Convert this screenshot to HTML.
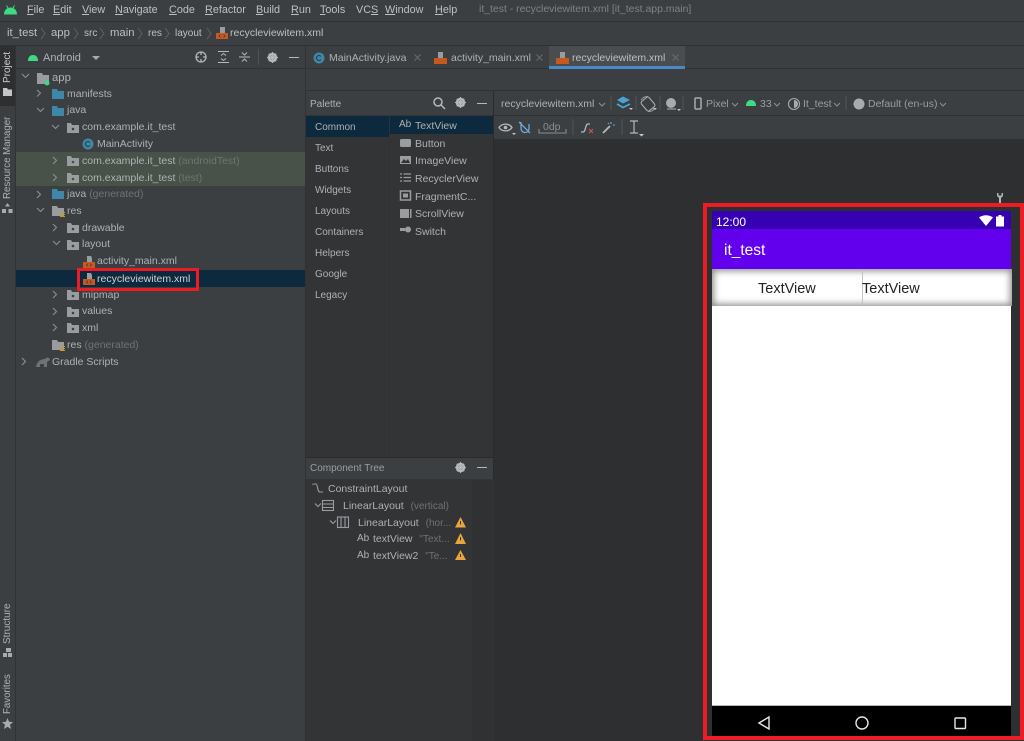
<!DOCTYPE html>
<html><head><meta charset="utf-8">
<style>
html,body{margin:0;padding:0;width:1024px;height:741px;overflow:hidden;background:#3c3f41}
body{position:relative;font-family:"Liberation Sans",sans-serif;font-size:10.5px;color:#aeb2b4}
.t{position:absolute;white-space:nowrap;line-height:14px}
.b{position:absolute}
.g{color:#6f7375}
.m{color:#bcc0c2;font-size:10.8px}
u{text-decoration:underline;text-underline-offset:1px}
svg{position:absolute;overflow:visible}
.v{position:absolute;white-space:nowrap;transform-origin:0 0;transform:rotate(-90deg);line-height:12px;font-size:10px;color:#aeb2b4}
</style></head><body>
<!-- structural bands -->
<div class="b" style="left:0;top:21px;width:1024px;height:1px;background:#323232"></div>
<div class="b" style="left:0;top:45px;width:1024px;height:1px;background:#323232"></div>
<div class="b" style="left:15px;top:46px;width:1px;height:695px;background:#323232"></div>
<div class="b" style="left:0;top:46px;width:15px;height:60px;background:#2d2f30"></div>
<div class="b" style="left:16px;top:68px;width:289px;height:1px;background:#323232"></div>
<div class="b" style="left:305px;top:46px;width:1px;height:695px;background:#323232"></div>
<div class="b" style="left:16px;top:270px;width:289px;height:17px;background:#0d293e"></div>
<div class="b" style="left:16px;top:152px;width:289px;height:34px;background:#495249"></div>

<!-- right side -->
<div class="b" style="left:306px;top:68px;width:718px;height:1px;background:#323232"></div>
<div class="b" style="left:306px;top:90px;width:718px;height:1px;background:#323232"></div>
<div class="b" style="left:549px;top:46px;width:136px;height:22px;background:#4a4d50"></div>
<div class="b" style="left:549px;top:66px;width:136px;height:3px;background:#4a88c7"></div>

<!-- palette panel -->
<div class="b" style="left:306px;top:115px;width:188px;height:342px;background:#323436"></div>
<div class="b" style="left:306px;top:116px;width:83px;height:21px;background:#0d293e"></div>
<div class="b" style="left:390px;top:116px;width:104px;height:18px;background:#0d293e"></div>
<div class="b" style="left:389px;top:116px;width:1px;height:341px;background:#2f3132"></div>
<div class="b" style="left:493px;top:91px;width:1px;height:650px;background:#2b2b2b"></div>
<div class="b" style="left:306px;top:457px;width:188px;height:1px;background:#2b2b2b"></div>
<div class="b" style="left:306px;top:479px;width:188px;height:262px;background:#323436"></div>
<div class="b" style="left:472px;top:480px;width:21px;height:261px;background:#2f3132"></div>

<!-- toolbars / canvas -->
<div class="b" style="left:494px;top:115px;width:530px;height:1px;background:#323232"></div>
<div class="b" style="left:494px;top:139px;width:530px;height:602px;background:#2d2f30"></div>

<!-- menu -->
<svg style="left:3px;top:5px" width="15" height="10" viewBox="0 0 15 10"><path d="M1 9.500C1 5 4 2.500 7.500 2.500S14 5 14 9.500Z" fill="#3ddc84"/><path d="M3.500 .5L5 3M11.500 .5L10 3" stroke="#3ddc84"/></svg>
<div class="t m" style="left:27px;top:3px"><u>F</u>ile</div>
<div class="t m" style="left:53px;top:3px"><u>E</u>dit</div>
<div class="t m" style="left:82px;top:3px"><u>V</u>iew</div>
<div class="t m" style="left:115px;top:3px"><u>N</u>avigate</div>
<div class="t m" style="left:169px;top:3px"><u>C</u>ode</div>
<div class="t m" style="left:205px;top:3px"><u>R</u>efactor</div>
<div class="t m" style="left:256px;top:3px"><u>B</u>uild</div>
<div class="t m" style="left:291px;top:3px"><u>R</u>un</div>
<div class="t m" style="left:320px;top:3px"><u>T</u>ools</div>
<div class="t m" style="left:356px;top:3px">VC<u>S</u></div>
<div class="t m" style="left:385px;top:3px"><u>W</u>indow</div>
<div class="t m" style="left:435px;top:3px"><u>H</u>elp</div>
<div class="t" style="left:479px;top:3px;color:#7f8385;font-size:10.45px">it_test - recycleviewitem.xml [it_test.app.main]</div>

<!-- breadcrumb -->
<div class="t m" style="left:7px;top:26px;font-size:11.300px">it_test</div>
<div class="t m" style="left:51px;top:26px;font-size:11.300px">app</div>
<div class="t m" style="left:84px;top:27px;font-size:10px">src</div>
<div class="t m" style="left:110px;top:26px;font-size:11.300px">main</div>
<div class="t m" style="left:148px;top:27px;font-size:10px">res</div>
<div class="t m" style="left:175px;top:27px;font-size:10px">layout</div>
<svg style="left:0;top:27px" width="215" height="13" fill="none" stroke="#5f6264"><path d="M41 1L45 6.500 41 12M74 1L78 6.500 74 12M100 1L104 6.500 100 12M138 1L142 6.500 138 12M165 1L169 6.500 165 12M207 1L211 6.500 207 12"/></svg>
<svg style="left:216px;top:27px" width="12" height="13"><path d="M4 0H9V6H4Z" fill="#9a9d9f"/><rect y="6" width="12" height="6" fill="#c5591f"/><path d="M4.500 7.500L3 9 4.500 10.500M7.500 7.500L9 9 7.500 10.500" stroke="#3c3f41" fill="none" stroke-width=".8"/></svg>
<div class="t m" style="left:230px;top:26px;font-size:10.5px">recycleviewitem.xml</div>

<!-- left strip -->
<div class="v" style="left:2px;top:83px;color:#cfcfcf">Project</div>
<svg style="left:2px;top:88px" width="11" height="8"><path d="M1 0H5L6 1.500H10V8H1Z" fill="#c4c4c4"/></svg>
<div class="v" style="left:2px;top:199px;font-size:9.7px">Resource Manager</div>
<svg style="left:2px;top:203px" width="11" height="10"><path d="M5.500 0L8 3.500H3ZM0 10V6H4V10ZM6.500 10V6H10.500V10Z" fill="#a8abad"/></svg>
<div class="v" style="left:2px;top:644px">Structure</div>
<svg style="left:3px;top:648px" width="9" height="9"><path d="M3 0H8V4H3ZM0 5H4V9H0ZM5 5H9V9H5Z" fill="#a8abad"/></svg>
<div class="v" style="left:2px;top:714px;font-size:9.7px">Favorites</div>
<svg style="left:2px;top:718px" width="11" height="11"><path d="M5.500 0L7 3.800 11 4.100 8 6.700 9 11 5.500 8.700 2 11 3 6.700 0 4.100 4 3.800Z" fill="#a8abad"/></svg>

<!-- project header -->
<svg style="left:28px;top:54px" width="10" height="7"><path d="M0 7C0 3 2 1 5 1S10 3 10 7Z" fill="#3ddc84"/></svg>
<div class="t" style="left:43px;top:51px;font-size:11px">Android</div>
<svg style="left:92px;top:56px" width="9" height="5"><path d="M0 0H8L4 4Z" fill="#a8abad"/></svg>
<svg style="left:195px;top:51px" width="12" height="12" fill="none" stroke="#b4b8ba" stroke-width="1.300"><circle cx="6" cy="6" r="5"/><path d="M6 1V4M6 8V11M1 6H4M8 6H11"/></svg>
<svg style="left:218px;top:51px" width="11" height="12" fill="none" stroke="#b4b8ba"><path d="M0 .5H11M0 11.500H11M3 4.500L5.500 2.500 8 4.500M3 7.500L5.500 9.500 8 7.500"/></svg>
<svg style="left:239px;top:51px" width="11" height="12" fill="none" stroke="#b4b8ba"><path d="M0 6H11M3 1.500L5.500 4 8 1.500M3 10.500L5.500 8 8 10.500"/></svg>
<div class="b" style="left:258px;top:49px;width:1px;height:16px;background:#515151"></div>
<svg style="left:267px;top:52px" width="11" height="11"><circle cx="5.500" cy="5.500" r="3.500" fill="none" stroke="#b4b8ba" stroke-width="2.500"/><path d="M5.500 0V11M0 5.500H11M1.800 1.800L9.200 9.200M9.200 1.800L1.800 9.200" stroke="#b4b8ba" stroke-width="1.200"/></svg>
<div class="b" style="left:289px;top:57px;width:10px;height:1px;background:#b4b8ba"></div>

<!-- tree -->
<svg style="left:0;top:69px" width="305" height="300" fill="none" stroke="#8d9092" stroke-width="1.100">
<path d="M22 5L25.500 8.500 29 5M37 21L40.500 24 37 27.500M37 39L40.500 42.500 44 39M52 56L55.500 59.500 59 56"/>
<path d="M53 88L56.500 91.500 53 95M53 105L56.500 108.500 53 112M37 122L40.500 125.500 37 129M37 139L40.500 142.500 44 139M53 155L56.500 158.500 53 162M53 172L56.500 175.500 60 172M53 222L56.500 225.500 53 229M53 239L56.500 242.500 53 246M53 255L56.500 258.500 53 262M22 289L25.500 292.500 22 296"/>
</svg>
<svg style="left:0;top:69px" width="305" height="300">
<path d="M37 4H42L43 6H49V15H37Z" fill="#9a9d9f"/><circle cx="47" cy="14" r="2.500" fill="#3ddc84"/>
<path d="M52 20H57L58 22H64V30H52Z" fill="#3f87a6"/>
<path d="M52 37H57L58 39H64V47H52Z" fill="#3f87a6"/>
<path d="M67 54H71L72 56H79V64H67Z" fill="#9a9d9f"/><circle cx="73" cy="60" r="1.300" fill="#3c3f41"/>
<path d="M67 87H71L72 89H79V97H67Z" fill="#9a9d9f"/><circle cx="73" cy="93" r="1.300" fill="#495249"/>
<path d="M67 104H71L72 106H79V114H67Z" fill="#9a9d9f"/><circle cx="73" cy="110" r="1.300" fill="#495249"/>
<path d="M52 120H57L58 122H64V130H52Z" fill="#3f87a6"/>
<path d="M52 137H57L58 139H64V147H52Z" fill="#9a9d9f"/><path d="M60 143.500H65M60 145.500H65M60 147.500H65" stroke="#c69a2b"/>
<path d="M67 154H71L72 156H79V164H67Z" fill="#9a9d9f"/><circle cx="73" cy="160" r="1.300" fill="#3c3f41"/>
<path d="M67 171H71L72 173H79V181H67Z" fill="#9a9d9f"/><circle cx="73" cy="177" r="1.300" fill="#3c3f41"/>
<path d="M67 221H71L72 223H79V231H67Z" fill="#9a9d9f"/><circle cx="73" cy="227" r="1.300" fill="#3c3f41"/>
<path d="M67 238H71L72 240H79V248H67Z" fill="#9a9d9f"/><circle cx="73" cy="244" r="1.300" fill="#3c3f41"/>
<path d="M67 254H71L72 256H79V264H67Z" fill="#9a9d9f"/><circle cx="73" cy="260" r="1.300" fill="#3c3f41"/>
<path d="M52 271H57L58 273H64V281H52Z" fill="#9a9d9f"/><path d="M60 277.500H65M60 279.500H65M60 281.500H65" stroke="#c69a2b"/>
<path d="M36 298C37 292 41 290 45 290C46 288 50 288 50 291L47 293V298H44V295H40V298Z" fill="#6f7274"/>
<circle cx="88" cy="75" r="5.500" fill="#3f87a6"/><path d="M90 73.500A2.500 2.500 0 1 0 90 76.500" stroke="#2d3a40" fill="none"/>
<path d="M87 187H91L92 189V193H87Z" fill="#9a9d9f"/><rect x="83" y="193" width="12" height="6" fill="#c5591f"/><path d="M88 194.500L86.500 196 88 197.500M90 194.500L91.500 196 90 197.500" stroke="#3c3f41" fill="none" stroke-width=".8"/>
<path d="M87 204H91L92 206V210H87Z" fill="#9a9d9f"/><rect x="83" y="210" width="12" height="6" fill="#c5591f"/><path d="M88 211.500L86.500 213 88 214.500M90 211.500L91.500 213 90 214.500" stroke="#3c3f41" fill="none" stroke-width=".8"/>
</svg>
<div class="t" style="left:52px;top:71px;font-size:11.300px">app</div>
<div class="t" style="left:67px;top:87px">manifests</div>
<div class="t" style="left:67px;top:103px">java</div>
<div class="t" style="left:82px;top:120px">com.example.it_test</div>
<div class="t" style="left:97px;top:137px">MainActivity</div>
<div class="t" style="left:82px;top:154px">com.example.it_test <span class="g">(androidTest)</span></div>
<div class="t" style="left:82px;top:171px">com.example.it_test <span class="g">(test)</span></div>
<div class="t" style="left:67px;top:187px">java <span class="g">(generated)</span></div>
<div class="t" style="left:67px;top:204px">res</div>
<div class="t" style="left:82px;top:221px">drawable</div>
<div class="t" style="left:82px;top:237px">layout</div>
<div class="t" style="left:97px;top:254px">activity_main.xml</div>
<div class="t" style="left:97px;top:272px;color:#d0d3d5">recycleviewitem.xml</div>
<div class="t" style="left:82px;top:288px">mipmap</div>
<div class="t" style="left:82px;top:304px">values</div>
<div class="t" style="left:82px;top:321px">xml</div>
<div class="t" style="left:67px;top:338px">res <span class="g">(generated)</span></div>
<div class="t" style="left:52px;top:355px">Gradle Scripts</div>
<div class="b" style="left:77px;top:268px;width:116px;height:17px;border:3px solid #ed1c24"></div>

<!-- tabs -->
<svg style="left:313px;top:52px" width="12" height="12"><circle cx="6" cy="6" r="5.500" fill="#3f87a6"/><path d="M8 4.500A2.500 2.500 0 1 0 8 7.500" stroke="#2d3a40" fill="none"/></svg>
<div class="t" style="left:329px;top:51px">MainActivity.java</div>
<svg style="left:414px;top:54px" width="120" height="8" fill="none" stroke="#6a6d6f"><path d="M.5 .5L6.500 6.500M6.500 .5L.5 6.500M122.500 .5L128.500 6.500M128.500 .5L122.500 6.500M258.500 .5L264.500 6.500M264.500 .5L258.500 6.500"/></svg>
<svg style="left:434px;top:52px" width="13" height="12"><path d="M4 0H9V6H4Z" fill="#9a9d9f"/><rect y="6" width="13" height="6" fill="#c5591f"/></svg>
<div class="t" style="left:451px;top:51px">activity_main.xml</div>
<svg style="left:556px;top:52px" width="13" height="12"><path d="M4 0H9V6H4Z" fill="#9a9d9f"/><rect y="6" width="13" height="6" fill="#c5591f"/></svg>
<div class="t" style="left:572px;top:51px;color:#bcc0c2">recycleviewitem.xml</div>

<!-- palette header -->
<div class="t" style="left:310px;top:98px;font-size:10px">Palette</div>
<svg style="left:433px;top:97px" width="12" height="12" fill="none" stroke="#b4b8ba" stroke-width="1.500"><circle cx="5" cy="5" r="4"/><path d="M8 8L12 12"/></svg>
<svg style="left:455px;top:97px" width="11" height="11"><circle cx="5.500" cy="5.500" r="3.500" fill="none" stroke="#b4b8ba" stroke-width="2.500"/><path d="M5.500 0V11M0 5.500H11M1.800 1.800L9.200 9.200M9.200 1.800L1.800 9.200" stroke="#b4b8ba" stroke-width="1.200"/></svg>
<div class="b" style="left:477px;top:103px;width:10px;height:1px;background:#b4b8ba"></div>
<div class="t" style="left:315px;top:121px;font-size:10px">Common</div>
<div class="t" style="left:315px;top:142px;font-size:10px">Text</div>
<div class="t" style="left:315px;top:163px;font-size:10px">Buttons</div>
<div class="t" style="left:315px;top:184px;font-size:10px">Widgets</div>
<div class="t" style="left:315px;top:205px;font-size:10px">Layouts</div>
<div class="t" style="left:315px;top:226px;font-size:10px">Containers</div>
<div class="t" style="left:315px;top:247px;font-size:10px">Helpers</div>
<div class="t" style="left:315px;top:268px;font-size:10px">Google</div>
<div class="t" style="left:315px;top:289px;font-size:10px">Legacy</div>
<div class="t" style="left:399px;top:118px;font-size:10px">Ab</div>
<div class="t" style="left:415px;top:119px">TextView</div>
<div class="t" style="left:415px;top:137px">Button</div>
<div class="t" style="left:415px;top:154px">ImageView</div>
<div class="t" style="left:415px;top:172px">RecyclerView</div>
<div class="t" style="left:415px;top:190px">FragmentC...</div>
<div class="t" style="left:415px;top:207px">ScrollView</div>
<div class="t" style="left:415px;top:225px">Switch</div>
<svg style="left:399px;top:138px" width="14" height="100">
<rect x="1" y="1" width="11" height="8" rx="1.500" fill="#9a9d9f"/>
<rect x="1" y="18" width="11" height="8" fill="#9a9d9f"/><path d="M2 25L5 21 7 23 9 21 11 25Z" fill="#323436"/>
<path d="M1 36H3M1 39.500H3M1 43H3M4.500 36H12M4.500 39.500H12M4.500 43H12" stroke="#9a9d9f" stroke-width="1.200"/>
<rect x="1.500" y="53" width="10" height="9" fill="none" stroke="#9a9d9f" stroke-width="1.500"/><rect x="4" y="55.500" width="5" height="4" fill="#9a9d9f"/>
<rect x="1" y="71" width="9" height="9" fill="#9a9d9f"/><rect x="11" y="71" width="1.500" height="9" fill="#9a9d9f"/>
<rect x="1" y="90" width="5" height="3" fill="#9a9d9f"/><circle cx="9" cy="91.500" r="3" fill="#9a9d9f"/>
</svg>

<!-- component tree -->
<div class="t" style="left:310px;top:462px;font-size:10px;color:#9a9ea0">Component Tree</div>
<svg style="left:455px;top:462px" width="11" height="11"><circle cx="5.500" cy="5.500" r="3.500" fill="none" stroke="#b4b8ba" stroke-width="2.500"/><path d="M5.500 0V11M0 5.500H11M1.800 1.800L9.200 9.200M9.200 1.800L1.800 9.200" stroke="#b4b8ba" stroke-width="1.200"/></svg>
<div class="b" style="left:477px;top:467px;width:10px;height:1px;background:#b4b8ba"></div>
<svg style="left:306px;top:480px" width="170" height="85" fill="none" stroke="#9a9d9f" stroke-width="1.100">
<path d="M8 4H10C12 4 11 12 14 12H17M7 3.500V5"/>
<path d="M9 23.500L12 26.500 15 23.500M24 40.500L27 43.500 30 40.500"/>
<rect x="16.500" y="20.500" width="11" height="10"/><path d="M16.500 24H27.500M16.500 27.500H27.500"/>
<rect x="31.500" y="37" width="11" height="10.500"/><path d="M35 37V47.500M39 37V47.500"/>
<g stroke="none"><path d="M154.500 37L160 47.500H149ZM154.500 53L160 64H149ZM154.500 70L160 80H149Z" fill="#e8a53a"/><path d="M154 41H155V44.500H154ZM154 57H155V60.500H154ZM154 74H155V77H154Z" fill="#333"/></g>
</svg>
<div class="t" style="left:328px;top:482px">ConstraintLayout</div>
<div class="t" style="left:343px;top:499px">LinearLayout <span class="g" style="margin-left:4px;font-size:10px">(vertical)</span></div>
<div class="t" style="left:358px;top:516px">LinearLayout <span class="g" style="margin-left:4px;font-size:10px">(hor...</span></div>
<div class="t" style="left:357px;top:532px;font-size:10px">Ab</div>
<div class="t" style="left:373px;top:532px">textView <span class="g" style="margin-left:4px;font-size:10px">"Text...</span></div>
<div class="t" style="left:357px;top:549px;font-size:10px">Ab</div>
<div class="t" style="left:373px;top:549px">textView2 <span class="g" style="margin-left:4px;font-size:10px">"Te...</span></div>

<!-- design toolbar -->
<div class="t" style="left:501px;top:97px;width:95px">recycleviewitem.xml</div>
<svg style="left:0;top:0" width="1024" height="140" fill="none" stroke="#8a8d8f" stroke-width="1.100">
<path d="M599 103L602 106 605 103M732 103L735 106 738 103M774 103L777 106 780 103M834 103L837 106 840 103M940 103L943 106 946 103"/>
<path d="M611 96V110M636 96V110M660 96V110M683 96V110M846 96V110" stroke="#505355"/>
<path d="M617 100L623 96.500 630 100 623 103.500Z" fill="#4aa3d8" stroke="none"/><path d="M617 104L623 107.500 630 104" stroke="#4aa3d8" stroke-width="1.800"/>
<rect x="643" y="98" width="10" height="12" rx="2" transform="rotate(-40 648 104)" stroke="#a8abad"/><path d="M641 100A7.500 7.500 0 0 1 648 96.500M655 108A7.500 7.500 0 0 1 648 111.500" stroke="#a8abad" stroke-width=".8"/>
<circle cx="671" cy="103" r="5" fill="#a8abad" stroke="none"/><path d="M667 109H676" stroke="#a8abad"/>
<rect x="695" y="98" width="6" height="11" rx="1" stroke="#a8abad" stroke-width="1.500"/>
<path d="M746 106C746 102 748 100 751 100S756 102 756 106Z" fill="#3ddc84" stroke="none"/>
<circle cx="794" cy="104" r="5.500" stroke="#a8abad"/><path d="M794 100A4 4 0 0 1 794 108Z" fill="#a8abad" stroke="none"/>
<circle cx="859" cy="104" r="5.500" fill="#a8abad" stroke="none"/>
<g stroke="#505355"><path d="M573 119V135M622 119V135"/></g>
<path d="M499 127.500C502 123 509 123 512 127.500 509 132 502 132 499 127.500Z" stroke="#b4b8ba" stroke-width="1.300"/><circle cx="505.500" cy="127.500" r="1.800" fill="#b4b8ba" stroke="none"/>
<path d="M521 122V128C521 134 529 134 529 128V124M519 122L530 133" stroke="#6fa8d8" stroke-width="1.300"/>
<path d="M539 129V133H566V129" stroke="#8a8d8f"/>
<path d="M581 132H583C586 132 585 124 588 124H590" stroke="#b4b8ba" stroke-width="1.300"/><path d="M589 129L593 133M593 129L589 133" stroke="#d05050"/>
<path d="M603 133L610 126" stroke="#b4b8ba" stroke-width="1.800"/><path d="M611 122V124M613 125H615M608 123L609 124" stroke="#6fa8d8"/>
<path d="M630 121H638M634 121V133M630 133H638" stroke="#b4b8ba" stroke-width="1.200"/>
</svg>
<svg style="left:0;top:0" width="1024" height="140"><path d="M512 133H516L514 135ZM629 108H633L631 110ZM653 108H657L655 110ZM677 109H681L679 111ZM639 134H644L641.500 136.500Z" fill="#c4c8ca"/></svg>
<div class="t" style="left:543px;top:120px;color:#8a8d8f">0dp</div>
<div class="t" style="left:706px;top:97px;color:#9a9ea0">Pixel</div>
<div class="t" style="left:760px;top:97px;color:#9a9ea0">33</div>
<div class="t" style="left:803px;top:97px;color:#9a9ea0">It_test</div>
<div class="t" style="left:868px;top:97px;color:#9a9ea0">Default (en-us)</div>

<!-- wrench -->
<svg style="left:996px;top:193px" width="8" height="10"><path d="M1 0V3L3 5V10H5V5L7 3V0H5.500V2.500H2.500V0Z" fill="#b0b3b5"/></svg>

<!-- phone -->
<div class="b" style="left:712px;top:211px;width:299px;height:18px;background:#3700b3"></div>
<div class="b" style="left:712px;top:229px;width:299px;height:40px;background:#6200ee"></div>
<div class="b" style="left:712px;top:269px;width:299px;height:437px;background:#fff"></div>
<div class="b" style="left:712px;top:269px;width:300px;height:37px;background:#fff;box-shadow:inset 0 0 7px 2px #8e8e8e"></div>
<div class="b" style="left:862px;top:270px;width:1px;height:35px;background:#c4c4c4"></div>
<div class="b" style="left:712px;top:705px;width:299px;height:1px;background:#b8b8b8"></div>
<div class="b" style="left:712px;top:706px;width:299px;height:31px;background:#000"></div>
<div class="t" style="left:716px;top:215px;color:#fff;font-size:12px">12:00</div>
<div class="t" style="left:724px;top:242px;color:#fff;font-size:15.500px;line-height:18px">it_test</div>
<div class="t" style="left:758px;top:281px;color:#222;font-size:14.500px;line-height:16px">TextView</div>
<div class="t" style="left:862px;top:281px;color:#222;font-size:14.500px;line-height:16px">TextView</div>
<svg style="left:979px;top:215px" width="27" height="13" fill="#fff"><path d="M0 2.500C4 -.5 10 -.5 14 2.500L7 11Z"/><path d="M17 1.500H19.500V0H22.500V1.500H25V11.500H17Z"/></svg>
<svg style="left:757px;top:716px" width="14" height="14" fill="none" stroke="#e8e8e8" stroke-width="1.400"><path d="M2 7L12 1V13Z"/></svg>
<svg style="left:855px;top:716px" width="14" height="14" fill="none" stroke="#e8e8e8" stroke-width="1.400"><circle cx="7" cy="7" r="6"/></svg>
<svg style="left:954px;top:717px" width="13" height="13" fill="none" stroke="#e8e8e8" stroke-width="1.400"><rect x="1" y="1" width="10.500" height="10.500" rx="1"/></svg>

<!-- red annotation -->
<div class="b" style="left:703px;top:203px;width:321px;height:537px;box-sizing:border-box;border:4px solid #ed1c24"></div>
</body></html>
